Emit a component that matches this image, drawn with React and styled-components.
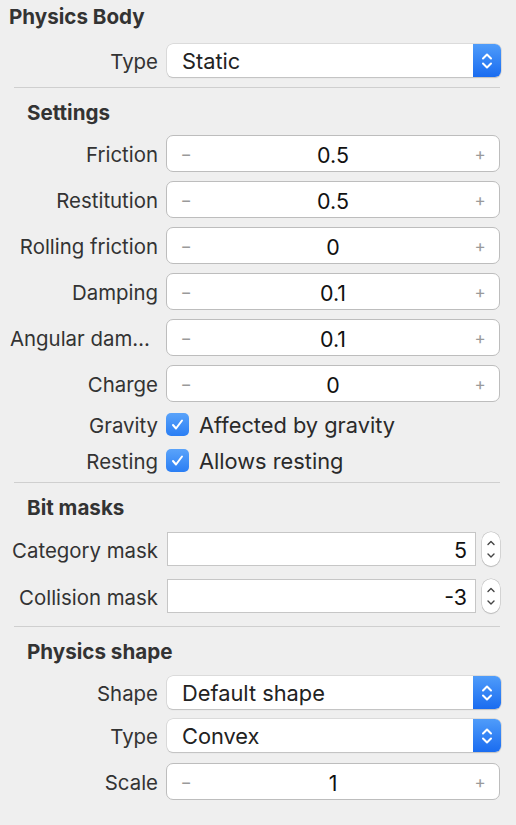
import React from 'react'
import styled, { createGlobalStyle } from 'styled-components'

const GlobalStyle = createGlobalStyle`
  html, body {
    margin: 0;
    padding: 0;
    background: #efefef;
  }
  body {
    font-family: Inter, "Helvetica Neue", "Liberation Sans", sans-serif;
    color: #2e2e2e;
    -webkit-font-smoothing: antialiased;
  }
`

const Panel = styled.div`
  width: 516px;
  height: 825px;
  background: #efefef;
  overflow: hidden;
`

const Title = styled.h2`
  margin: 0;
  padding: 1px 0 0 9px;
  font-size: 20.6px;
  font-weight: 700;
  line-height: 32px;
  color: #333;
`

const SectionTitle = styled.h3`
  margin: ${p => p.top || 11}px 0 0;
  padding-left: 27px;
  font-size: 20.6px;
  font-weight: 700;
  line-height: 28px;
  color: #333;
`

const Separator = styled.div`
  height: 1px;
  background: #cfcfcf;
  margin: ${p => p.top || 11}px 16px 0 14px;
`

const Rows = styled.div`
  display: flex;
  flex-direction: column;
  gap: ${p => p.gap || 0}px;
  margin-top: ${p => p.top || 0}px;
`

const Row = styled.div`
  display: grid;
  grid-template-columns: 148px 1fr;
  column-gap: 8px;
  align-items: center;
  padding: 0 16px 0 10px;
  height: ${p => p.h || 37}px;
`

const Label = styled.span`
  text-align: right;
  font-size: 20.4px;
  padding-top: 2px;
  white-space: nowrap;
  overflow: hidden;
  text-overflow: ellipsis;
  color: #333;
`

const Popup = styled.div`
  display: flex;
  height: 33px;
  margin-left: 1px;
  margin-right: -1px;
  background: #fff;
  border-radius: 6px;
  box-shadow: 0 0 0 0.5px #c8c8c8, 0 1px 1px rgba(0, 0, 0, 0.22);
  overflow: hidden;
`

const PopupText = styled.span`
  flex: 1;
  padding: 1px 0 0 15px;
  font-size: 21.8px;
  line-height: 33px;
  color: #222;
`

const PopupArrows = styled.div`
  width: 28px;
  display: flex;
  align-items: center;
  justify-content: center;
  background: linear-gradient(#4f9cfa, #1a6cf0);
`

const Stepper = styled.div`
  display: flex;
  align-items: center;
  height: 37px;
  box-sizing: border-box;
  background: #fff;
  border: 1.5px solid #bdbdbd;
  border-radius: 7px;
  padding: 0 12px 0 12px;
`

const StepSign = styled.span`
  width: 14px;
  text-align: center;
  font-size: 17px;
  color: #9a9a9a;
`

const StepValue = styled.span`
  flex: 1;
  text-align: center;
  padding-top: 2px;
  font-size: 21.4px;
  color: #111;
`

const CheckWrap = styled.div`
  display: flex;
  align-items: center;
  gap: 10px;
`

const CheckBox = styled.span`
  width: 23px;
  height: 23px;
  border-radius: 5px;
  background: linear-gradient(#5aa3fa, #2a7ef4);
  display: flex;
  align-items: center;
  justify-content: center;
`

const CheckText = styled.span`
  padding-top: 2px;
  font-size: 21.8px;
  color: #2a2a2a;
`

const MaskField = styled.div`
  display: flex;
  align-items: center;
  gap: 6px;
  margin-left: 1px;
`

const MaskInput = styled.div`
  flex: 1;
  height: 34px;
  box-sizing: border-box;
  background: #fff;
  border: 1px solid #c6c6c6;
  text-align: right;
  padding: 2px 8px 0 0;
  font-size: 21.4px;
  line-height: 30px;
  color: #111;
`

const MiniStepper = styled.div`
  width: 18px;
  height: 34px;
  box-sizing: border-box;
  background: #fff;
  border-radius: 9px;
  box-shadow: 0 0 0 0.5px #bcbcbc, 0 1px 1px rgba(0, 0, 0, 0.2);
  display: flex;
  align-items: center;
  justify-content: center;
`

const Arrows = () => (
  <svg width="14" height="22" viewBox="0 0 14 22">
    <path d="M3 8.5 L7 4.5 L11 8.5 M3 13.5 L7 17.5 L11 13.5" fill="none" stroke="#fff" strokeWidth="2" strokeLinecap="round" strokeLinejoin="round" />
  </svg>
)

const SmallArrows = () => (
  <svg width="12" height="28" viewBox="0 0 12 28">
    <path d="M3 9.5 L6 6.5 L9 9.5 M3 19 L6 22 L9 19" fill="none" stroke="#444" strokeWidth="1.4" strokeLinecap="round" strokeLinejoin="round" />
  </svg>
)

const Check = () => (
  <svg width="15" height="15" viewBox="0 0 15 15">
    <path d="M3 8 L6 11.5 L12 3.5" fill="none" stroke="#fff" strokeWidth="2" strokeLinecap="round" strokeLinejoin="round" />
  </svg>
)

const PopupRow = ({ label, value }) => (
  <Row h={33}>
    <Label>{label}</Label>
    <Popup>
      <PopupText>{value}</PopupText>
      <PopupArrows><Arrows /></PopupArrows>
    </Popup>
  </Row>
)

const StepperRow = ({ label, value }) => (
  <Row>
    <Label>{label}</Label>
    <Stepper>
      <StepSign>−</StepSign>
      <StepValue>{value}</StepValue>
      <StepSign>+</StepSign>
    </Stepper>
  </Row>
)

const CheckRow = ({ label, text }) => (
  <Row h={36}>
    <Label>{label}</Label>
    <CheckWrap>
      <CheckBox><Check /></CheckBox>
      <CheckText>{text}</CheckText>
    </CheckWrap>
  </Row>
)

const MaskRow = ({ label, value }) => (
  <Row h={34}>
    <Label>{label}</Label>
    <MaskField>
      <MaskInput>{value}</MaskInput>
      <MiniStepper><SmallArrows /></MiniStepper>
    </MaskField>
  </Row>
)

const settings = [
  ['Friction', '0.5'],
  ['Restitution', '0.5'],
  ['Rolling friction', '0'],
  ['Damping', '0.1'],
  ['Angular damping', '0.1'],
  ['Charge', '0'],
]

export default function App() {
  return (
    <Panel>
      <GlobalStyle />
      <Title>Physics Body</Title>
      <Rows top={11}>
        <PopupRow label="Type" value="Static" />
      </Rows>
      <Separator top={10} />

      <SectionTitle>Settings</SectionTitle>
      <Rows top={8} gap={9}>
        {settings.map(([l, v]) => <StepperRow key={l} label={l} value={v} />)}
      </Rows>
      <Rows top={4}>
        <CheckRow label="Gravity" text="Affected by gravity" />
        <CheckRow label="Resting" text="Allows resting" />
      </Rows>
      <Separator top={4} />

      <SectionTitle>Bit masks</SectionTitle>
      <Rows top={10} gap={13}>
        <MaskRow label="Category mask" value="5" />
        <MaskRow label="Collision mask" value="-3" />
      </Rows>
      <Separator top={13} />

      <SectionTitle>Physics shape</SectionTitle>
      <Rows top={10} gap={10}>
        <PopupRow label="Shape" value="Default shape" />
        <PopupRow label="Type" value="Convex" />
      </Rows>
      <Rows top={11}>
        <StepperRow label="Scale" value="1" />
      </Rows>
    </Panel>
  )
}
